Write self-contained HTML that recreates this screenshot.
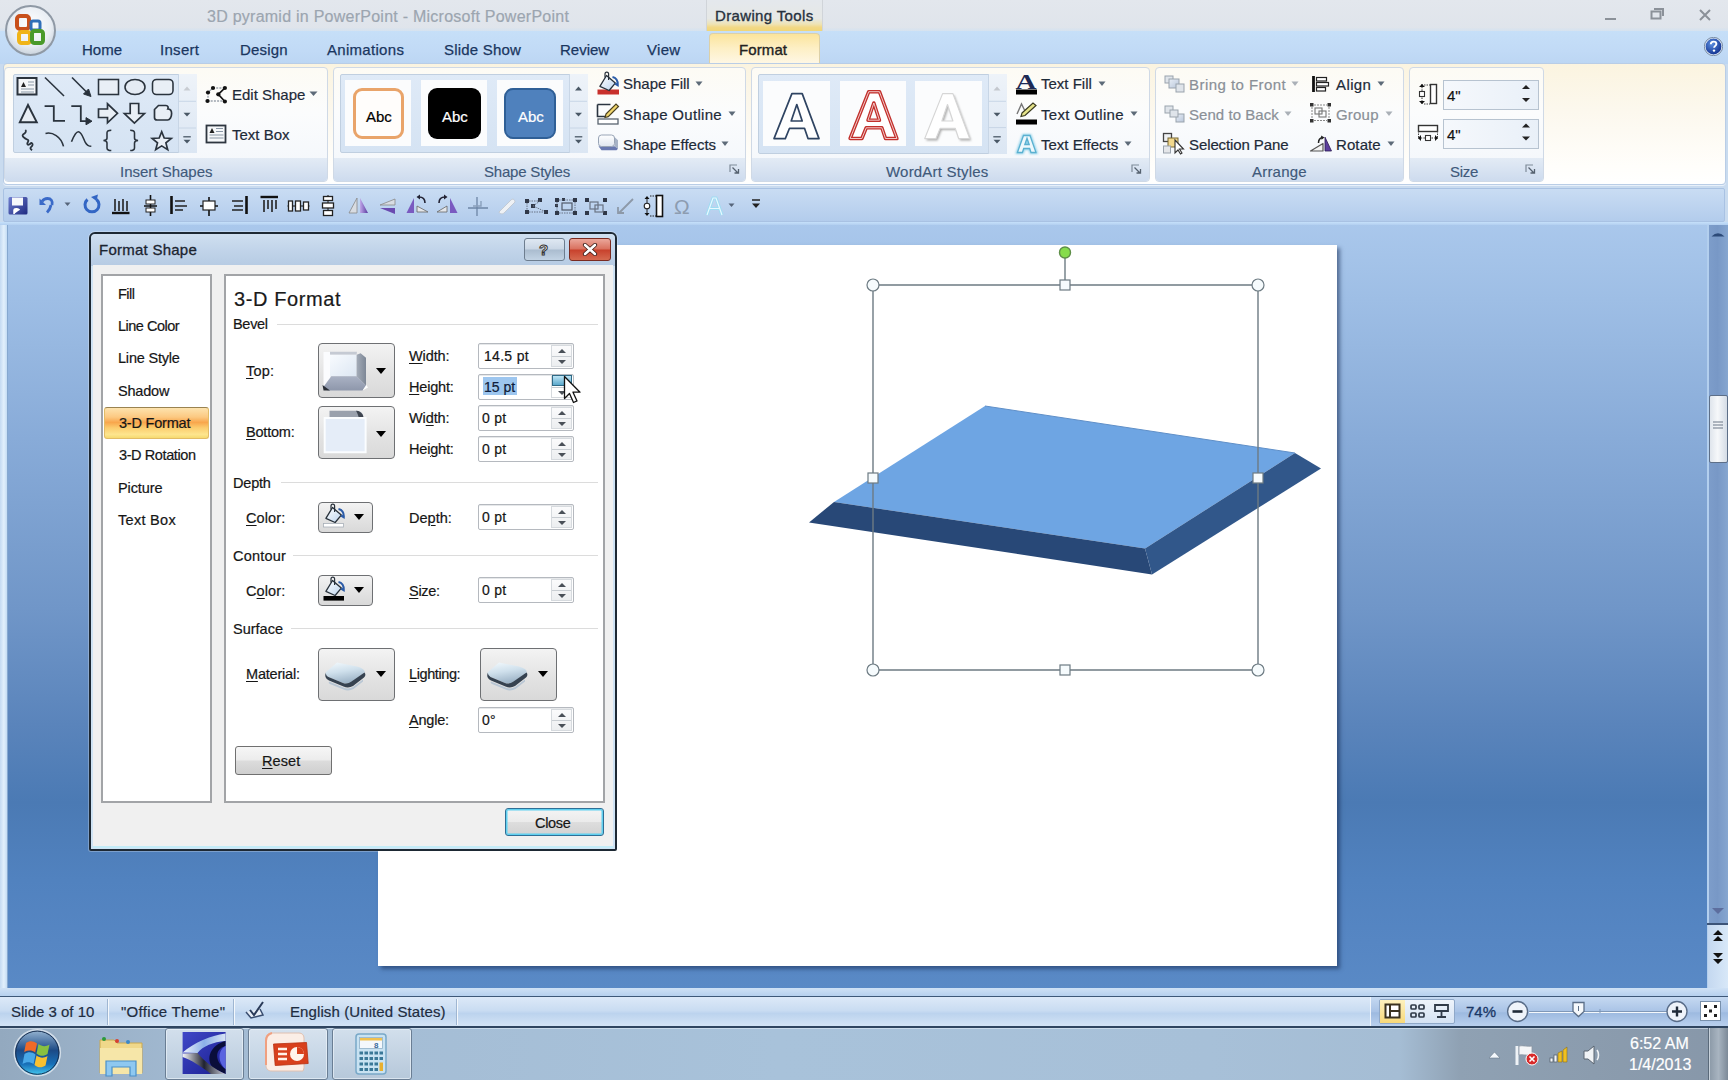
<!DOCTYPE html>
<html><head><meta charset="utf-8">
<style>
*{box-sizing:border-box;margin:0;padding:0}
html,body{width:1728px;height:1080px;overflow:hidden;position:relative;background:#c9dbef}
body{font-family:"Liberation Sans",sans-serif;color:#000}
.a{position:absolute}
.t{position:absolute;white-space:nowrap;line-height:1;-webkit-text-stroke:0.2px currentColor}
#titlebar{left:0;top:0;width:1728px;height:32px;background:linear-gradient(#e3e7ed,#dfe4eb)}
#tabrow{left:0;top:31px;width:1728px;height:33px;background:linear-gradient(#c6dff8,#c1daf6 60%,#bcd6f3)}
#ribbon{left:3px;top:63px;width:1723px;height:122px;border-radius:4px;background:linear-gradient(#fbf4e0 0%,#fcf8ee 40%,#fffefb 85%,#ffffff 100%);border:1px solid #b9cde6;box-shadow:0 1px 0 #e8f0fa}
.grp{position:absolute;top:67px;height:115px;border:1px solid #cfd9e6;border-radius:4px;background:linear-gradient(#fdfbf4 0%,#fbfcfd 40%,#f2f6fb 100%)}
.grp .lbl{position:absolute;left:0;right:0;bottom:0;height:23px;background:linear-gradient(#e3ebf5,#cddbee);border-radius:0 0 3px 3px}
.gl{position:absolute;white-space:nowrap;line-height:1;font-size:15px;color:#40597a;top:164px;-webkit-text-stroke:0.15px currentColor}
#qat{left:3px;top:188px;width:1722px;height:34px;background:linear-gradient(#c9dcf3,#b3ccec);border:1px solid #a9c2e3;border-radius:2px}
#work{left:0;top:222px;width:1728px;height:774px;background:linear-gradient(#aac8ec 0%,#9ebee5 10%,#88abd8 28%,#7096c8 50%,#5a84bb 65%,#4b7ab4 75%,#5182bf 85%,#5686c3 93%,#5a8ac6 100%)}
#slide{left:378px;top:245px;width:959px;height:721px;background:#fff;box-shadow:3px 3px 4px rgba(20,40,80,.55)}
#status{left:0;top:997px;width:1728px;height:30px;background:linear-gradient(#dde9f8 0%,#c9dcf2 45%,#bcd3ee 55%,#d5e5f6 100%)}
#taskbar{left:0;top:1027px;width:1728px;height:53px;background:linear-gradient(90deg,#93a9bf 0%,#a3bbd3 12%,#a8c2da 45%,#a7c0d8 70%,#a5bdd4 81%,#8fa1b3 84.5%,#8797a9 100%)}

.dt{position:absolute;white-space:nowrap;line-height:1;font-size:14.5px;color:#161616;-webkit-text-stroke:0.2px #161616}
.inp{position:absolute;width:96px;height:26px;border:1px solid #b5b9bf;border-radius:2px;background:#fff;box-shadow:inset 0 1px 0 #e6e8ea}
.spin{position:absolute;left:72px;top:1px;width:21px;height:22px;border:1px solid #d6dade;background:linear-gradient(#fbfbfc,#eceef0)}
.spin:before{content:"";position:absolute;left:0;right:0;top:10px;height:1px;background:#c8cdd2}
.spin i{position:absolute;left:6px;width:0;height:0;border-left:4px solid transparent;border-right:4px solid transparent}
.spin i.u{top:3px;border-bottom:4px solid #4a5058}
.spin i.d{top:14px;border-top:4px solid #4a5058}
.ddb{position:absolute;border:1.5px solid #6e7073;border-radius:4px;background:linear-gradient(#f3f3f3,#e2e2e2 60%,#d9d9d9)}
.ddb b{position:absolute;width:0;height:0;border-left:5.5px solid transparent;border-right:5.5px solid transparent;border-top:6px solid #000}
.sep{position:absolute;height:1px;background:#dcdcdc}
.ul{text-decoration:underline;text-underline-offset:2px}
</style></head><body>

<div id="titlebar" class="a"></div>
<div class="a" style="left:0;top:28px;width:1728px;height:4px;background:linear-gradient(#dde4ec,#d3e2f1)"></div>
<div class="t" style="left:207px;top:9px;font-size:16px;letter-spacing:0.25px;color:#9ca5b0">3D pyramid in PowerPoint - Microsoft PowerPoint</div>
<div class="a" style="left:706px;top:0;width:117px;height:31px;background:linear-gradient(#e4e8ed 0%,#e6e8e6 60%,#eee3b4 78%,#f2d886 88%,#f0d677 100%);border-left:1px solid #d0d4d9;border-right:1px solid #d0d4d9"></div>
<div class="t" style="left:715px;top:8px;font-size:15px;letter-spacing:0.35px;color:#27313e;-webkit-text-stroke:0.35px #27313e">Drawing Tools</div>
<div class="a" style="left:1605px;top:18px;width:11px;height:2px;background:#8b9199"></div>
<svg class="a" style="left:1650px;top:8px" width="15" height="12"><path d="M1.5 3.5h9v7h-9z M4 1h9v7" fill="none" stroke="#8b9199" stroke-width="2"/></svg>
<svg class="a" style="left:1698px;top:8px" width="14" height="14"><path d="M2 2L12 12M12 2L2 12" stroke="#8b9199" stroke-width="2"/></svg>


<div id="tabrow" class="a"></div>
<div class="t" style="left:82px;top:42px;font-size:15px;color:#1a365f;-webkit-text-stroke:0.25px #1a365f">Home</div>
<div class="t" style="left:160px;top:42px;font-size:15px;letter-spacing:0.3px;color:#1a365f;-webkit-text-stroke:0.25px #1a365f">Insert</div>
<div class="t" style="left:240px;top:42px;font-size:15px;letter-spacing:0.2px;color:#1a365f;-webkit-text-stroke:0.25px #1a365f">Design</div>
<div class="t" style="left:327px;top:42px;font-size:15px;letter-spacing:0.3px;color:#1a365f;-webkit-text-stroke:0.25px #1a365f">Animations</div>
<div class="t" style="left:444px;top:42px;font-size:15px;letter-spacing:0.2px;color:#1a365f;-webkit-text-stroke:0.25px #1a365f">Slide Show</div>
<div class="t" style="left:560px;top:42px;font-size:15px;color:#1a365f;-webkit-text-stroke:0.25px #1a365f">Review</div>
<div class="t" style="left:647px;top:42px;font-size:15px;letter-spacing:0.3px;color:#1a365f;-webkit-text-stroke:0.25px #1a365f">View</div>
<div class="a" style="left:709px;top:33px;width:111px;height:32px;border-radius:4px 4px 0 0;background:linear-gradient(#fbe49c 0%,#fdefc4 45%,#fef8e8 100%);border:1px solid #dcd0a8;border-bottom:none"></div>
<div class="t" style="left:739px;top:42px;font-size:15px;letter-spacing:0.1px;color:#222;-webkit-text-stroke:0.35px #222">Format</div>
<svg class="a" style="left:1704px;top:37px" width="19" height="19" viewBox="0 0 19 19"><defs><radialGradient id="hg" cx="40%" cy="35%" r="70%"><stop offset="0" stop-color="#5c8fe0"/><stop offset="1" stop-color="#0c2a8a"/></radialGradient></defs><circle cx="9.5" cy="9.5" r="8.5" fill="url(#hg)" stroke="#dbe6f5" stroke-width="1.2"/><circle cx="9.5" cy="9.5" r="9.2" fill="none" stroke="#4a5a70" stroke-width="0.6"/><path d="M6.8 7.2c0-1.6 1.2-2.6 2.8-2.6s2.8 1 2.8 2.4c0 1.8-2.3 2-2.3 3.8" fill="none" stroke="#fff" stroke-width="1.9"/><circle cx="10" cy="13.6" r="1.2" fill="#fff"/></svg>


<svg class="a" style="left:4px;top:4px" width="53" height="53" viewBox="0 0 53 53">
<defs><radialGradient id="obg" cx="50%" cy="40%" r="60%"><stop offset="0" stop-color="#ffffff"/><stop offset="0.7" stop-color="#e8edf3"/><stop offset="1" stop-color="#c9d2dc"/></radialGradient></defs>
<circle cx="26.5" cy="26.5" r="24.5" fill="url(#obg)" stroke="#8f99a5" stroke-width="2"/>
<rect x="13" y="12" width="12" height="13" rx="3" fill="none" stroke="#c8501c" stroke-width="4"/>
<rect x="27" y="17" width="9" height="9" rx="2" fill="none" stroke="#2f6fb8" stroke-width="3"/>
<rect x="15" y="28" width="11" height="11" rx="2.5" fill="none" stroke="#f0b418" stroke-width="4"/>
<rect x="28" y="27" width="11" height="12" rx="2.5" fill="none" stroke="#4a9a2a" stroke-width="4"/>
</svg>
<div id="ribbon" class="a"></div>
<div class="grp" style="left:4px;width:324px"><div class="lbl"></div></div>

<div class="a" style="left:13px;top:74px;width:184px;height:79px;border:1px solid #c0cfe0;border-radius:2px;background:linear-gradient(#dfeaf7,#d5e3f3)"></div>
<div class="a" style="left:178px;top:74px;width:19px;height:79px;border-left:1px solid #c8d6e6;background:linear-gradient(#eef3f9,#dbe6f3)"></div>
<svg class="a" style="left:0;top:60px" width="200" height="100" viewBox="0 60 200 100" fill="none" stroke="#2a333d" stroke-width="1.55">
<rect x="17.5" y="78" width="19" height="16.5" fill="#f4f6f8" stroke-width="2"/>
<path d="M21 87l2.5-5 2.5 5z" fill="#222" stroke="none"/><path d="M28 82h6M28 85h6M21 89h13M21 92h13" stroke="#8a97a6" stroke-width="1.2"/>
<path d="M45 77.5L64 96"/>
<path d="M72 77.5L88 93.5"/><path d="M91 96.5l-7.5-2.5 5-5z" fill="#28313b" stroke-width="1"/>
<rect x="98.5" y="79.5" width="20" height="15" fill="#e9eff6"/>
<ellipse cx="135" cy="87" rx="10" ry="7.5" fill="#e4ebf4"/>
<rect x="152.5" y="79.5" width="20.5" height="15" rx="4" fill="#e9eff6"/>
<path d="M28 105L19.8 122.3h17z" fill="#e7edf4" stroke-width="1.9"/>
<path d="M44.6 106.2h9.2v14.6H65" stroke-width="1.8"/>
<path d="M71.3 106.2h9.5v15h7.5" stroke-width="1.8"/><path d="M92 121.2l-6-3.6v7.2z" fill="#28313b" stroke-width="1"/>
<path d="M98.5 109h9v-5.2l10 9.5-10 9.5v-5.3h-9z" fill="#e9eff6" stroke-width="1.7"/>
<path d="M130.2 103.5h8.5v10h5.7l-10 9.5-10-9.5h5.8z" fill="#e9eff6" stroke-width="1.7"/>
<path d="M154.5 113v-3.5l4-4h7.5c2 0 2.5 2 1.8 3.5 2.8 0 3.8 2.2 3.8 4.5 0 3.2-1.7 6.5-4 6.5h-10.5c-1.6 0-2.6-1-2.6-2.5z" fill="#e9eff6" stroke-width="1.7"/>
<path d="M25.3 130c1.6 1.5 0 3-2.3 4.6-1 1 0 2.2 1.6 3.4 1.4 1.2 2.6 1.3 3.6 2.2 1.2 1.2-1.8 2.6-.8 4 1 1.3 2.7-.1 3.3-1 .7-.9 2.4.5 1.8 1.9-.7 1.7-2.8 2.4-2 3.6.3.6.9 1 1.6 1.4" stroke-width="1.8"/>
<path d="M45.5 133.4c7-1.6 15.5 3 18 13"/>
<path d="M71.5 141.8c2-5 4-10 6.8-10 3.5 0 5.4 7.8 7 10.5 2 3.6 3.6 4 6 4"/>
<path d="M111.3 130.2c-2.8 0-4.3.5-4.3 2.6v5.5c0 1.3-1.3 2-3.5 2.3 2.2.3 3.5 1 3.5 2.3v5c0 2 1.5 2.6 4.3 2.6"/>
<path d="M130.2 130.2c2.8 0 4.3.5 4.3 2.6v5.5c0 1.3 1.3 2 3.5 2.3-2.2.3-3.5 1-3.5 2.3v5c0 2-1.5 2.6-4.3 2.6"/>
<path d="M161.7 131.7l2.5 6.3 7.1.5-5.4 4.4 1.8 6.8-6-3.8-6 3.8 1.8-6.8-5.4-4.4 7.1-.5z" fill="#e9eff6" stroke-width="1.7"/>
<path d="M183.5 90.5l3.5-4 3.5 4z" fill="#c8ccd2" stroke="none"/>
<path d="M179 101.3h17M179 128h17" stroke="#c8d6e6" stroke-width="1"/>
<path d="M183.5 112.8h7l-3.5 3.8z" fill="#4a5866" stroke="none"/>
<path d="M183.3 136.8h7.5" stroke="#4a5866" stroke-width="1.3"/><path d="M183.5 139.8h7l-3.5 3.8z" fill="#4a5866" stroke="none"/>
</svg>
<svg class="a" style="left:200px;top:80px" width="40" height="70" viewBox="200 80 40 70">
<path d="M213 88h12M208 92.5v8.5M207.5 101h17.5" stroke="#9aa2ac" stroke-width="1.4" stroke-dasharray="2 1.2" fill="none"/>
<path d="M208 92.5l4.9-4.6" stroke="#9aa2ac" stroke-width="1.2" fill="none"/>
<path d="M224.9 88l-6.6 6.3 6.6 7.2" stroke="#111" stroke-width="1.7" fill="none"/>
<g fill="#111"><circle cx="213" cy="88" r="2.1"/><circle cx="224.9" cy="88" r="2.1"/><circle cx="208" cy="92.5" r="2.1"/><circle cx="218.3" cy="94.3" r="2.1"/><circle cx="207.5" cy="101" r="2.1"/><circle cx="224.9" cy="101.5" r="2.1"/></g>
<rect x="206.5" y="125.5" width="19" height="17" fill="#f6f8fa" stroke="#2e3640" stroke-width="1.8"/>
<path d="M209.5 133l2.5-5 2.5 5z" fill="#222"/><path d="M216 128.5h7M216 131.5h7M209.5 135h14M209.5 138h14" stroke="#8a97a6" stroke-width="1.2"/>
</svg>
<div class="t" style="left:232px;top:87px;font-size:15px;color:#1e2a38">Edit Shape</div>
<svg class="a" style="left:309px;top:91px" width="9" height="6"><path d="M0.5 0.5h8l-4 4.5z" fill="#5d6a78"/></svg>
<div class="t" style="left:232px;top:127px;font-size:15px;color:#1e2a38">Text Box</div>
<div class="grp" style="left:333px;width:413px"><div class="lbl"></div></div>

<div class="a" style="left:340px;top:74px;width:248px;height:79px;border:1px solid #c0cfe0;border-radius:2px;background:linear-gradient(#dfeaf7,#d5e3f3)"></div>
<div class="a" style="left:345px;top:80px;width:66px;height:66px;background:#fbfcfd"></div>
<div class="a" style="left:421px;top:80px;width:66px;height:66px;background:#fbfcfd"></div>
<div class="a" style="left:497px;top:80px;width:66px;height:66px;background:#fbfcfd"></div>
<div class="a" style="left:353px;top:88px;width:51px;height:51px;border:3px solid #e9a46a;border-radius:9px;background:#fffdfb"></div>
<div class="a" style="left:428px;top:88px;width:53px;height:51px;border-radius:9px;background:#000"></div>
<div class="a" style="left:504px;top:88px;width:52px;height:51px;border:2px solid #2f5f96;border-radius:9px;background:#4f81bd"></div>
<div class="t" style="left:366px;top:109px;font-size:15px;color:#000">Abc</div>
<div class="t" style="left:442px;top:109px;font-size:15px;color:#fff">Abc</div>
<div class="t" style="left:518px;top:109px;font-size:15px;color:#fff">Abc</div>
<div class="a" style="left:569px;top:74px;width:19px;height:79px;border-left:1px solid #c8d6e6;background:linear-gradient(#eef3f9,#dbe6f3)"></div>
<svg class="a" style="left:560px;top:70px" width="40" height="90" viewBox="560 70 40 90">
<path d="M575 90.5l3.5-4 3.5 4z" fill="#4a5866"/>
<path d="M570 101.3h17M570 128h17" stroke="#c8d6e6" stroke-width="1"/>
<path d="M575 112.8h7l-3.5 3.8z" fill="#4a5866"/>
<path d="M574.8 136.8h7.5" stroke="#4a5866" stroke-width="1.3"/><path d="M575 139.8h7l-3.5 3.8z" fill="#4a5866"/>
</svg>
<svg class="a" style="left:590px;top:70px" width="40" height="90" viewBox="590 70 40 90">
<rect x="597.5" y="89.5" width="21.5" height="5" fill="#c8302c"/>
<g transform="translate(274,-432)"><path d="M332.5 507.5l8.8 7.6-6.2 7.4-9.2-4.2z" fill="url(#bk)" stroke="#27303a" stroke-width="1.3" stroke-linejoin="round"/>
<path d="M331 509.5v-3.5c0-2.6 3.6-2.6 3.6 0v6" fill="none" stroke="#27303a" stroke-width="1.2"/>
<path d="M338.5 509c3.2.6 5.6 3.6 5.2 8.2l-2.6-1.6" fill="none" stroke="#2c5ca8" stroke-width="2.2"/></g>
<path d="M597.5 104.5h13M597.5 104.5v12h11" fill="none" stroke="#2a3440" stroke-width="1.6"/>
<path d="M606 114l10-10 2.5 2.5-10 10-3.5 1z" fill="#f1d66e" stroke="#4a4020" stroke-width="1.2"/>
<rect x="598" y="119" width="20" height="5" fill="#fff" stroke="#5a6470" stroke-width="1.3"/>
<defs><linearGradient id="sef" x1="0" y1="0" x2="0" y2="1"><stop offset="0" stop-color="#ffffff"/><stop offset="1" stop-color="#dfe6f0"/></linearGradient></defs>
<path d="M614.5 137l3.5 3.2v8.5l-3.5-2.5z" fill="#a6b2c6"/>
<path d="M598.5 146.2h16l3.5 2.5-1.5 1.6h-15z" fill="#6878b0"/>
<rect x="598.5" y="135" width="16" height="11.5" rx="3" fill="url(#sef)" stroke="#98a4b6" stroke-width="1"/>
</svg>
<div class="t" style="left:623px;top:76px;font-size:15px;color:#1e2a38">Shape Fill</div>
<svg class="a" style="left:695px;top:81px" width="9" height="6"><path d="M0.5 0.5h7l-3.5 4.5z" fill="#5d6a78"/></svg>
<div class="t" style="left:623px;top:107px;font-size:15px;letter-spacing:0.3px;color:#1e2a38">Shape Outline</div>
<svg class="a" style="left:728px;top:111px" width="9" height="6"><path d="M0.5 0.5h7l-3.5 4.5z" fill="#5d6a78"/></svg>
<div class="t" style="left:623px;top:137px;font-size:15px;color:#1e2a38">Shape Effects</div>
<svg class="a" style="left:721px;top:141px" width="9" height="6"><path d="M0.5 0.5h7l-3.5 4.5z" fill="#5d6a78"/></svg>
<svg class="a" style="left:729px;top:164px" width="11" height="10"><path d="M1 8V1h7" fill="none" stroke="#7f8b99" stroke-width="1.2"/><path d="M3.5 3.5l5 5M9.5 5v4h-4" fill="none" stroke="#55616f" stroke-width="1.3"/></svg>
<div class="grp" style="left:751px;width:399px"><div class="lbl"></div></div>

<div class="a" style="left:758px;top:74px;width:249px;height:80px;border:1px solid #c0cfe0;border-radius:2px;background:linear-gradient(#dfeaf7,#d5e3f3)"></div>
<div class="a" style="left:763px;top:81px;width:67px;height:65px;background:#fbfcfd"></div>
<div class="a" style="left:840px;top:81px;width:66px;height:65px;background:#fbfcfd"></div>
<div class="a" style="left:915px;top:81px;width:67px;height:65px;background:#fbfcfd"></div>
<svg class="a" style="left:760px;top:80px" width="230" height="70" viewBox="760 80 230 70">
<defs><filter id="ash" x="-20%" y="-20%" width="150%" height="150%"><feGaussianBlur stdDeviation="1.3"/></filter></defs>
<path d="M791.9 93.6H802.2L819 138.6H808L804.5 128.3H789.5L785.3 138.6H774Z M796.8 104.5L802.2 121H791.2Z" fill="#fff" fill-rule="evenodd" stroke="#2f4462" stroke-width="1.7" stroke-linejoin="round"/>
<g transform="translate(77,-1) translate(796,116) scale(1.04) translate(-796,-116)"><path d="M791.9 93.6H802.2L819 138.6H808L804.5 128.3H789.5L785.3 138.6H774Z M796.8 104.5L802.2 121H791.2Z" fill="#fff" fill-rule="evenodd" stroke="#c2302c" stroke-width="3.4" stroke-linejoin="round"/><path d="M791.9 93.6H802.2L819 138.6H808L804.5 128.3H789.5L785.3 138.6H774Z M796.8 104.5L802.2 121H791.2Z" fill="none" fill-rule="evenodd" stroke="#fbe8e8" stroke-width="0.8"/></g>
<g transform="translate(150.7,0)"><path d="M791.9 93.6H802.2L819 138.6H808L804.5 128.3H789.5L785.3 138.6H774Z M796.8 104.5L802.2 121H791.2Z" transform="translate(1.5,1.8)" fill="#aaa" filter="url(#ash)" fill-rule="evenodd"/><path d="M791.9 93.6H802.2L819 138.6H808L804.5 128.3H789.5L785.3 138.6H774Z M796.8 104.5L802.2 121H791.2Z" fill="#fff" fill-rule="evenodd" stroke="#d6d6d6" stroke-width="1.2" stroke-linejoin="round"/></g>
</svg>
<div class="a" style="left:988px;top:74px;width:19px;height:80px;border-left:1px solid #c8d6e6;background:linear-gradient(#eef3f9,#dbe6f3)"></div>
<svg class="a" style="left:980px;top:70px" width="40" height="90" viewBox="980 70 40 90">
<path d="M993.5 90.5l3.5-4 3.5 4z" fill="#c4c8ce"/>
<path d="M989 101.3h17M989 127.6h17" stroke="#c8d6e6" stroke-width="1"/>
<path d="M993.5 112.8h7l-3.5 3.8z" fill="#4a5866"/>
<path d="M993.3 136.8h7.5" stroke="#4a5866" stroke-width="1.3"/><path d="M993.5 139.8h7l-3.5 3.8z" fill="#4a5866"/>
</svg>
<svg class="a" style="left:1010px;top:70px" width="35" height="90" viewBox="1010 70 35 90">
<text x="1015.5" y="89" font-family="Liberation Serif" font-weight="700" font-size="22" fill="#1d2a55" textLength="21" lengthAdjust="spacingAndGlyphs">A</text>
<rect x="1016" y="89.5" width="21" height="5" fill="#000"/>
<path d="M1017 114l4.5-10 3 6" fill="none" stroke="#777" stroke-width="1.4"/>
<path d="M1022 113l11-10 3 2.5-11 10-4 1z" fill="#e6e48a" stroke="#3a3a20" stroke-width="1.2"/>
<rect x="1016" y="119.5" width="21" height="5" fill="#000"/>
<defs><filter id="teg" x="-30%" y="-30%" width="160%" height="160%"><feGaussianBlur stdDeviation="1"/></filter></defs>
<path d="M1023.5 135.5h6.5l6 17h-5l-1.3-4h-6l-1.3 4h-5z M1024.8 144.5h4.4l-2.2-6.3z" fill="none" stroke="#8fd2ea" stroke-width="3" filter="url(#teg)"/>
<path d="M1023.5 135.5h6.5l6 17h-5l-1.3-4h-6l-1.3 4h-5z M1024.8 144.5h4.4l-2.2-6.3z" fill="#eef8fc" fill-rule="evenodd" stroke="#5ab0d0" stroke-width="1.3"/>
</svg>
<div class="t" style="left:1041px;top:76px;font-size:15px;color:#1e2a38">Text Fill</div>
<svg class="a" style="left:1098px;top:81px" width="9" height="6"><path d="M0.5 0.5h7l-3.5 4.5z" fill="#5d6a78"/></svg>
<div class="t" style="left:1041px;top:107px;font-size:15px;letter-spacing:0.3px;color:#1e2a38">Text Outline</div>
<svg class="a" style="left:1130px;top:111px" width="9" height="6"><path d="M0.5 0.5h7l-3.5 4.5z" fill="#5d6a78"/></svg>
<div class="t" style="left:1041px;top:137px;font-size:15px;color:#1e2a38">Text Effects</div>
<svg class="a" style="left:1124px;top:141px" width="9" height="6"><path d="M0.5 0.5h7l-3.5 4.5z" fill="#5d6a78"/></svg>
<svg class="a" style="left:1131px;top:164px" width="11" height="10"><path d="M1 8V1h7" fill="none" stroke="#7f8b99" stroke-width="1.2"/><path d="M3.5 3.5l5 5M9.5 5v4h-4" fill="none" stroke="#55616f" stroke-width="1.3"/></svg>
<div class="grp" style="left:1155px;width:249px"><div class="lbl"></div></div>

<svg class="a" style="left:1160px;top:72px" width="175" height="85" viewBox="1160 72 175 85">
<defs><linearGradient id="bf" x1="0" y1="0" x2="1" y2="1"><stop offset="0" stop-color="#e8eef6"/><stop offset="1" stop-color="#b8c6da"/></linearGradient></defs>
<rect x="1165" y="76" width="8" height="7" fill="#dfe4ea" stroke="#9aa3ad" stroke-width="1"/>
<rect x="1169" y="79" width="10" height="9" fill="url(#bf)" stroke="#9aa3ad" stroke-width="1"/>
<rect x="1176" y="84" width="8" height="8" fill="#dfe4ea" stroke="#9aa3ad" stroke-width="1"/>
<rect x="1165" y="106" width="8" height="7" fill="#dfe4ea" stroke="#9aa3ad" stroke-width="1"/>
<rect x="1176" y="114" width="8" height="8" fill="url(#bf)" stroke="#9aa3ad" stroke-width="1"/>
<rect x="1170" y="110" width="8" height="7" fill="#dfe4ea" stroke="#9aa3ad" stroke-width="1"/>
<rect x="1163.5" y="133.5" width="8" height="8" fill="#eef0f2" stroke="#444" stroke-width="1.3"/>
<rect x="1168" y="138" width="10" height="9" fill="#f2d88c" stroke="#776633" stroke-width="1"/>
<rect x="1163.5" y="146" width="7" height="7" fill="#e4e6e9" stroke="#9aa3ad" stroke-width="1"/>
<path d="M1175 140v13l3-3 2.5 4 1.5-1-2.5-4h4z" fill="#fff" stroke="#333" stroke-width="1.1"/>
<path d="M1313.5 76v16" stroke="#111" stroke-width="2.8"/>
<rect x="1316.5" y="77.5" width="10" height="3.5" fill="#fff" stroke="#222" stroke-width="1.2"/><rect x="1316.5" y="82.5" width="12" height="3.5" fill="#fff" stroke="#222" stroke-width="1.2"/><rect x="1316.5" y="87.5" width="9" height="3.5" fill="#fff" stroke="#222" stroke-width="1.2"/>
<g fill="#333"><rect x="1310" y="103" width="3.5" height="3.5"/><rect x="1327.5" y="103" width="3.5" height="3.5"/><rect x="1310" y="119" width="3.5" height="3.5"/><rect x="1327.5" y="119" width="3.5" height="3.5"/></g>
<path d="M1312 107v11M1329 107v11M1314 105h13M1314 120.5h13" stroke="#888" stroke-width="1" stroke-dasharray="2 1"/>
<rect x="1315" y="108" width="7" height="6" fill="none" stroke="#777" stroke-width="1.1"/><rect x="1319" y="111" width="7" height="6" fill="none" stroke="#777" stroke-width="1.1"/>
<path d="M1310.5 151L1323 143.5V151Z" fill="#f4f4f4" stroke="#555" stroke-width="1.2" stroke-linejoin="round"/>
<path d="M1318.5 143c0-3 1.5-5 4-5.5" fill="none" stroke="#222" stroke-width="1.5"/><path d="M1321 135.5l3.5 2-3 2.2z" fill="#222"/>
<path d="M1325 137.2L1331.5 151H1325Z" fill="#5c3e9e" stroke="#2a1a50" stroke-width="0.8"/>
</svg>
<div class="t" style="left:1189px;top:77px;font-size:15px;letter-spacing:0.45px;color:#8a9097">Bring to Front</div>
<svg class="a" style="left:1291px;top:81px" width="9" height="6"><path d="M0.5 0.5h7l-3.5 4.5z" fill="#aab0b7"/></svg>
<div class="t" style="left:1189px;top:107px;font-size:15px;letter-spacing:0.05px;color:#8a9097">Send to Back</div>
<svg class="a" style="left:1284px;top:111px" width="9" height="6"><path d="M0.5 0.5h7l-3.5 4.5z" fill="#aab0b7"/></svg>
<div class="t" style="left:1189px;top:137px;font-size:15px;letter-spacing:-0.1px;color:#1e2a38">Selection Pane</div>
<div class="t" style="left:1336px;top:77px;font-size:15px;letter-spacing:0.4px;color:#1e2a38">Align</div>
<svg class="a" style="left:1377px;top:81px" width="9" height="6"><path d="M0.5 0.5h7l-3.5 4.5z" fill="#5d6a78"/></svg>
<div class="t" style="left:1336px;top:107px;font-size:15px;letter-spacing:0.2px;color:#8a9097">Group</div>
<svg class="a" style="left:1385px;top:111px" width="9" height="6"><path d="M0.5 0.5h7l-3.5 4.5z" fill="#aab0b7"/></svg>
<div class="t" style="left:1336px;top:137px;font-size:15px;letter-spacing:0.1px;color:#1e2a38">Rotate</div>
<svg class="a" style="left:1387px;top:141px" width="9" height="6"><path d="M0.5 0.5h7l-3.5 4.5z" fill="#5d6a78"/></svg>
<div class="grp" style="left:1409px;width:135px"><div class="lbl"></div></div>

<svg class="a" style="left:1414px;top:78px" width="30" height="70" viewBox="1414 78 30 70">
<rect x="1430.5" y="84.5" width="6" height="19" fill="#fff" stroke="#333" stroke-width="1.4"/>
<path d="M1422 84v20" stroke="#333" stroke-width="1" stroke-dasharray="1.5 1.2"/>
<path d="M1419 87l3-3 3 3zM1419 101l3 3 3-3z" fill="#111"/>
<rect x="1419.5" y="91.5" width="5" height="5" fill="#fff" stroke="#333" stroke-width="1.1"/>
<path d="M1424 85h6M1424 104h6" stroke="#444" stroke-width="1" stroke-dasharray="1.5 1"/>
<rect x="1418.5" y="125.5" width="19" height="6" fill="#fff" stroke="#333" stroke-width="1.4"/>
<path d="M1418 138h20" stroke="#333" stroke-width="1" stroke-dasharray="1.5 1.2"/>
<path d="M1421 135l-3 3 3 3zM1435 135l3 3-3 3z" fill="#111"/>
<rect x="1425.5" y="135.5" width="5" height="5" fill="#fff" stroke="#333" stroke-width="1.1"/>
<path d="M1418.5 131v7M1437.5 131v7" stroke="#444" stroke-width="1" stroke-dasharray="1.5 1"/>
</svg>
<div class="a" style="left:1443px;top:80px;width:96px;height:30px;border:1px solid #b7c3d0;background:linear-gradient(90deg,#f5f8fc,#e9f0f8)"></div>
<div class="a" style="left:1443px;top:119px;width:96px;height:30px;border:1px solid #b7c3d0;background:linear-gradient(90deg,#f5f8fc,#e9f0f8)"></div>
<div class="t" style="left:1447px;top:88px;font-size:15px;color:#111">4"</div>
<div class="t" style="left:1447px;top:127px;font-size:15px;color:#111">4"</div>
<svg class="a" style="left:1520px;top:84px" width="12" height="60"><path d="M2 5l4-4 4 4zM2 14l4 4 4-4zM2 43.5l4-4 4 4zM2 52.5l4 4 4-4z" fill="#222"/></svg>
<svg class="a" style="left:1525px;top:164px" width="11" height="10"><path d="M1 8V1h7" fill="none" stroke="#7f8b99" stroke-width="1.2"/><path d="M3.5 3.5l5 5M9.5 5v4h-4" fill="none" stroke="#55616f" stroke-width="1.3"/></svg>

<div class="gl" style="left:120px">Insert Shapes</div>
<div class="gl" style="left:484px;letter-spacing:-0.2px">Shape Styles</div>
<div class="gl" style="left:886px;letter-spacing:0.2px">WordArt Styles</div>
<div class="gl" style="left:1252px;letter-spacing:0.2px">Arrange</div>
<div class="gl" style="left:1450px;letter-spacing:-0.3px">Size</div>
<div id="qat" class="a"></div>
<svg class="a" style="left:0;top:188px" width="780" height="34" viewBox="0 188 780 34">
<defs><linearGradient id="flop" x1="0" y1="0" x2="1" y2="1"><stop offset="0" stop-color="#6f7fd0"/><stop offset="1" stop-color="#1f2a80"/></linearGradient>
<linearGradient id="purp" x1="0" y1="0" x2="1" y2="0"><stop offset="0" stop-color="#c0a8e8"/><stop offset="1" stop-color="#5a3aa0"/></linearGradient></defs>
<rect x="8.5" y="197" width="19" height="17.5" rx="1.5" fill="url(#flop)"/>
<rect x="12" y="197.5" width="11" height="8" fill="#f6f8fb"/>
<path d="M14 214v-4c0-1.3 4-2 5.5 0" fill="#fff" stroke="#fff" stroke-width="1.5"/>
<path d="M52 205c1-4-1-6.5-4.5-6.5-2.5 0-4.5 1.5-5.5 3" fill="none" stroke="#3a6ac8" stroke-width="2.8"/><path d="M39.5 198.5v6.5h6.5z" fill="#3a6ac8"/><path d="M51 205c-.5 3-2 5.5-4 7.5" fill="none" stroke="#3a6ac8" stroke-width="2.8"/>
<path d="M64.5 202.5h6l-3 3.5z" fill="#56657a"/>
<path d="M96.5 199.5a7 7 0 1 1-9 0" fill="none" stroke="#3366c4" stroke-width="3"/><path d="M91 197l5.5 4 1.5-6.5z" fill="#3366c4"/>
<path d="M112 213h17.5" stroke="#111" stroke-width="2.4"/><path d="M115 199v12M119 201v10M123 199v12M127 201v10" stroke="#222" stroke-width="1.6"/>
<path d="M150.5 195v21M144 206h13" stroke="#111" stroke-width="1.6"/><rect x="146" y="200" width="9" height="4" fill="#fff" stroke="#222" stroke-width="1"/><rect x="146" y="208" width="9" height="4" fill="#fff" stroke="#222" stroke-width="1"/>
<path d="M171.5 196v18" stroke="#111" stroke-width="2.6"/><path d="M175 201h10M175 206h12M175 210h8" stroke="#222" stroke-width="1.5"/>
<path d="M209 197v19M200 206h18" stroke="#111" stroke-width="1.6"/><rect x="203" y="201" width="12" height="9" fill="#fff" stroke="#222" stroke-width="1.2"/>
<path d="M246.5 196v18" stroke="#111" stroke-width="2.6"/><path d="M232 201h11M234 206h9M232 210h11" stroke="#222" stroke-width="1.5"/>
<path d="M260.5 197h17.5" stroke="#111" stroke-width="2.4"/><path d="M264 200v12M268 200v9M272 200v12M276 200v9" stroke="#222" stroke-width="1.6"/>
<path d="M287.5 206h22" stroke="#222" stroke-width="1.1"/><rect x="288.5" y="201" width="4" height="10" fill="#fff" stroke="#222" stroke-width="1.3"/><rect x="295.5" y="201" width="5" height="10" fill="#fff" stroke="#222" stroke-width="1.3"/><rect x="303.5" y="202" width="5" height="8" fill="#fff" stroke="#222" stroke-width="1.3"/>
<path d="M328 195v21" stroke="#222" stroke-width="1.1"/><rect x="323.5" y="196.5" width="9" height="4" fill="#fff" stroke="#222" stroke-width="1.3"/><rect x="322.5" y="203" width="11" height="5" fill="#fff" stroke="#222" stroke-width="1.3"/><rect x="323.5" y="210.5" width="9" height="5" fill="#fff" stroke="#222" stroke-width="1.3"/>
<path d="M357 198l-8 15h8z" fill="#d8dce2" stroke="#888" stroke-width="0.8"/><path d="M360 198l8 15h-8z" fill="url(#purp)"/>
<path d="M395 199l-15 6h15z" fill="#d8dce2" stroke="#888" stroke-width="0.8"/><path d="M395 208l-15 0 15 6z" fill="#6a4ab0"/>
<path d="M414 198l-7.5 15h7.5z" fill="#7a5ac0"/><path d="M417 212h11l-11-6z" fill="#e4e6ea" stroke="#666" stroke-width="0.8"/><path d="M419 197c4 0 6 2 6 6" fill="none" stroke="#223" stroke-width="1.6"/><path d="M416.5 197l3.5-2.5v5z" fill="#223"/>
<path d="M450 198l7.5 15H450z" fill="#7a5ac0"/><path d="M447 212h-10l10-6z" fill="#e4e6ea" stroke="#666" stroke-width="0.8"/><path d="M445 197c-4 0-6 2-6 6" fill="none" stroke="#223" stroke-width="1.6"/><path d="M447.5 197l-3.5-2.5v5z" fill="#223"/>
<path d="M477 197v19M468 208h20" stroke="#6d86a6" stroke-width="1.3"/><path d="M473 206h8v-5" fill="none" stroke="#8aa0bc" stroke-width="1.4"/>
<path d="M499 212l12-12c2-2 4 0 4 2l-11 11c-2 2-5 0-5-1z" fill="#eef1f5" stroke="#c2cad4" stroke-width="1"/>
<g fill="#303848"><rect x="525" y="199" width="4" height="4"/><rect x="538" y="198" width="4" height="4"/><rect x="531" y="204" width="4" height="4"/><rect x="525" y="210" width="4" height="4"/><rect x="544" y="210" width="4" height="4"/></g>
<path d="M527 203v7M529 201h9M533 206l7-5M533 206l11 5M529 212h15" stroke="#606a7a" stroke-width="0.9" stroke-dasharray="1.5 1"/>
<g fill="#303848"><rect x="555" y="198" width="4" height="4"/><rect x="573" y="198" width="4" height="4"/><rect x="555" y="211" width="4" height="4"/><rect x="573" y="211" width="4" height="4"/><rect x="562" y="198" width="3" height="3"/><rect x="555" y="204" width="3" height="3"/></g>
<rect x="562" y="203" width="10" height="7" fill="none" stroke="#505a6a" stroke-width="1.2"/><path d="M557 202v9M575 202v9M559 200h14M559 213h14" stroke="#606a7a" stroke-width="0.9" stroke-dasharray="1.5 1"/>
<g fill="#303848"><rect x="585" y="198" width="4" height="4"/><rect x="603" y="198" width="4" height="4"/><rect x="585" y="211" width="4" height="4"/><rect x="603" y="211" width="4" height="4"/></g>
<rect x="590" y="202" width="8" height="7" fill="none" stroke="#6a7484" stroke-width="1.2"/><rect x="595" y="205" width="8" height="7" fill="none" stroke="#6a7484" stroke-width="1.2"/>
<path d="M633 199l-14 14M618 207v6h6" fill="none" stroke="#8d99a8" stroke-width="1.8"/>
<path d="M650 196h8M650 216h8" stroke="#222" stroke-width="1" stroke-dasharray="1.5 1"/><rect x="656.5" y="195.5" width="6" height="21" fill="#fff" stroke="#111" stroke-width="1.6"/><path d="M647 197v18" stroke="#222" stroke-width="1"/><circle cx="647" cy="206" r="2.8" fill="#fff" stroke="#222" stroke-width="1.1"/><path d="M644.5 199l2.5-3 2.5 3zM644.5 213l2.5 3 2.5-3z" fill="#111"/>
<text x="674" y="214" font-family="Liberation Sans" font-size="21" fill="#8d9cb0">&#937;</text>
<path d="M707 215l6-17h3l6 17M709.5 208.5h10" fill="none" stroke="#9fdcf2" stroke-width="3.2"/><path d="M707 215l6-17h3l6 17M709.5 208.5h10" fill="none" stroke="#e8f8ff" stroke-width="1.2"/>
<path d="M728.5 203.5h6l-3 3.5z" fill="#56657a"/>
<path d="M752 200h8" stroke="#222" stroke-width="1.5"/><path d="M752 203.5h8l-4 4.5z" fill="#222"/>
</svg>

<div id="work" class="a"></div>
<div id="slide" class="a"></div>
<svg class="a" style="left:378px;top:245px" width="959" height="721" viewBox="378 245 959 721">
<path d="M985 406L1295 453L1145 548.5L834 502Z" fill="#6ea5e3"/>
<path d="M834 502L1145 548.5L1152 574.4L809 522.4Z" fill="#284877"/>
<path d="M1145 548.5L1295 453L1321 468.5L1152 574.4Z" fill="#31578a"/>
<path d="M985 406L1295 453" stroke="#5f8fc8" stroke-width="1" fill="none"/>
<g fill="none" stroke="#6d7b83" stroke-width="1.4">
<path d="M873 285H1258V670H873Z"/>
<path d="M1065 258V280"/>
</g>
<g fill="#f6fbfd" stroke="#6d7b83" stroke-width="1.2">
<circle cx="873" cy="285" r="6"/><circle cx="1258" cy="285" r="6"/><circle cx="873" cy="670" r="6"/><circle cx="1258" cy="670" r="6"/>
<rect x="1060" y="280" width="10" height="10"/><rect x="1060" y="665" width="10" height="10"/>
<rect x="868" y="473" width="10" height="10"/><rect x="1253" y="473" width="10" height="10"/>
</g>
<circle cx="1065" cy="252.5" r="5.5" fill="#86dc4c" stroke="#5e8e48" stroke-width="1.4"/>
</svg>


<div class="a" style="left:89px;top:232px;width:528px;height:619px;border:2px solid #1d2833;border-radius:6px 6px 2px 2px;background:#cfe3f4;box-shadow:0 0 0 1px rgba(255,255,255,.25)"></div>
<div class="a" style="left:91px;top:234px;width:524px;height:32px;border-radius:5px 5px 0 0;background:linear-gradient(#cfdff0,#c0d3e9 55%,#b6cbe3)"></div>
<div class="a" style="left:93px;top:265px;width:520px;height:583px;background:#f0f0f0;border-bottom:2px solid #c4ecf8"></div>
<div class="t" style="left:99px;top:242px;font-size:15px;letter-spacing:0.25px;color:#1b2430;-webkit-text-stroke:0.3px #1b2430">Format Shape</div>
<div class="a" style="left:524px;top:238px;width:41px;height:23px;border:1px solid #6d7d8f;border-radius:3px;background:linear-gradient(#dfe8f2 0%,#c9d6e5 48%,#aabccf 52%,#c2d3e4 100%)"></div>
<div class="t" style="left:539px;top:242px;font-size:15px;font-weight:700;color:#fff;-webkit-text-stroke:1px #333">?</div>
<div class="a" style="left:569px;top:238px;width:42px;height:23px;border:1px solid #7a2a20;border-radius:3px;background:linear-gradient(#eba79b 0%,#d9705e 48%,#c8412c 52%,#d56a50 100%)"></div>
<svg class="a" style="left:582px;top:243px" width="16" height="13"><path d="M3 2L13 11M13 2L3 11" stroke="#3a1a14" stroke-width="4.2" stroke-linecap="round"/><path d="M3 2L13 11M13 2L3 11" stroke="#fff" stroke-width="2.6" stroke-linecap="round"/></svg>
<div class="a" style="left:101px;top:274px;width:111px;height:529px;border:2px solid #a2a4a7;background:#fff"></div>
<div class="a" style="left:224px;top:274px;width:381px;height:529px;border:2px solid #a2a4a7;background:#fff"></div>
<div class="dt" style="left:118px;top:287px;letter-spacing:-0.5px">Fill</div>
<div class="dt" style="left:118px;top:319px;letter-spacing:-0.5px">Line Color</div>
<div class="dt" style="left:118px;top:351px;letter-spacing:-0.2px">Line Style</div>
<div class="dt" style="left:118px;top:384px;letter-spacing:-0.2px">Shadow</div>
<div class="a" style="left:104px;top:407px;width:105px;height:32px;border:1px solid #e2bc66;border-top:1.5px solid #9a8350;border-radius:3px;background:linear-gradient(#fde3ae 0%,#fcc982 30%,#f8a64c 48%,#fbcc6e 66%,#fde58e 88%,#f6da70 100%)"></div>
<div class="dt" style="left:119px;top:416px;letter-spacing:-0.2px">3-D Format</div>
<div class="dt" style="left:119px;top:448px;letter-spacing:-0.4px">3-D Rotation</div>
<div class="dt" style="left:118px;top:481px;letter-spacing:-0.1px">Picture</div>
<div class="dt" style="left:118px;top:513px;letter-spacing:0.3px">Text Box</div>
<div class="t" style="left:234px;top:289px;font-size:20px;letter-spacing:0.6px;color:#1a1a1a">3-D Format</div>
<div class="dt" style="left:233px;top:317px;letter-spacing:-0.3px">Bevel</div><div class="sep" style="left:277px;top:324px;width:321px"></div>
<div class="dt" style="left:246px;top:364px;letter-spacing:0.2px"><span class="ul">T</span>op:</div>
<div class="dt" style="left:246px;top:425px;letter-spacing:-0.2px"><span class="ul">B</span>ottom:</div>
<div class="ddb" style="left:318px;top:343px;width:77px;height:55px"><b style="left:57px;top:24px"></b></div>
<div class="ddb" style="left:318px;top:406px;width:77px;height:53px"><b style="left:57px;top:24px"></b></div>
<svg class="a" style="left:320px;top:346px" width="50" height="110" viewBox="320 346 50 110">
<defs><linearGradient id="bvt" x1="0" y1="0" x2="1" y2="1"><stop offset="0" stop-color="#f8fbfe"/><stop offset="1" stop-color="#dde7f3"/></linearGradient>
<linearGradient id="bvr" x1="0" y1="0" x2="1" y2="0"><stop offset="0" stop-color="#a4acb8"/><stop offset="1" stop-color="#7d8796"/></linearGradient>
<linearGradient id="bvb" x1="0" y1="0" x2="0" y2="1"><stop offset="0" stop-color="#aab2c4"/><stop offset="1" stop-color="#8e97ab"/></linearGradient></defs>
<path d="M323.5 352h7v34l-7 4z" fill="#fbfcfe"/>
<path d="M330 351.8h27l-0.5 3h-26.5z" fill="#c5cad3"/>
<path d="M330 354.8h26.6v21.5h-26.6z" fill="url(#bvt)"/>
<path d="M356.6 354.8l4-1.5 5.4 4.5v27.7l-9.4-9z" fill="url(#bvr)"/>
<path d="M323.5 386.7l7.8-10.4h25.3l9.4 9.2-3.4 4.9h-34.9z" fill="url(#bvb)"/>
<path d="M322.5 385l7.5 5.5h-6.5z" fill="#2a2e36"/>
<path d="M362.5 390.4l3.5-4.9v-1l2 3z" fill="#fff"/>
<path d="M329.5 410.8h27c3 0 5 1.5 6.1 3.5v4.9h-33.1z" fill="#9aa1ad"/>
<path d="M356 410.8c3.5 0 6 2 7.2 5l0.6 3.5l-5-1.5c-0.5-2-1.5-5-2.8-7z" fill="#3e4550"/>
<path d="M324.7 418h40.9v34.3h-40.9z" fill="#e5edf8"/>
<path d="M324.7 418h40.9v34.3h-40.9z" fill="none" stroke="#fbfdff" stroke-width="2"/>
</svg>
<div class="dt" style="left:409px;top:349px;letter-spacing:-0.1px"><span class="ul">W</span>idth:</div>
<div class="dt" style="left:409px;top:380px;letter-spacing:-0.2px"><span class="ul">H</span>eight:</div>
<div class="dt" style="left:409px;top:411px;letter-spacing:-0.1px">Wi<span class="ul">d</span>th:</div>
<div class="dt" style="left:409px;top:442px;letter-spacing:-0.2px">Hei<span class="ul">g</span>ht:</div>
<div class="inp" style="left:478px;top:343px"><div class="spin"><i class="u"></i><i class="d"></i></div></div>
<div class="inp" style="left:478px;top:374px"><div class="spin" style="background:#fff"><i class="u" style="display:none"></i><i class="d"></i></div></div>
<div class="inp" style="left:478px;top:405px"><div class="spin"><i class="u"></i><i class="d"></i></div></div>
<div class="inp" style="left:478px;top:436px"><div class="spin"><i class="u"></i><i class="d"></i></div></div>
<div class="dt" style="left:484px;top:349px;font-size:14px;letter-spacing:0.3px">14.5 pt</div>
<div class="a" style="left:483px;top:377px;width:34px;height:18px;background:#9dc6ef"></div>
<div class="dt" style="left:484px;top:380px;font-size:14px;letter-spacing:0px;color:#0c2044">15 pt</div>
<div class="dt" style="left:482px;top:411px;font-size:14px;letter-spacing:0.3px">0 pt</div>
<div class="dt" style="left:482px;top:442px;font-size:14px;letter-spacing:0.3px">0 pt</div>
<div class="a" style="left:552px;top:375px;width:20px;height:11px;border:1.5px solid #2f6a86;background:linear-gradient(#bfe6f6,#5aa8cc)"></div>
<svg class="a" style="left:560px;top:372px" width="24" height="34"><path d="M4.5 4.5v22l5-5 4 9 3.5-1.6-4-8.7h7z" fill="#fff" stroke="#111" stroke-width="1.3" stroke-linejoin="round"/></svg>
<div class="dt" style="left:233px;top:476px;letter-spacing:-0.2px">Depth</div><div class="sep" style="left:281px;top:482px;width:317px"></div>
<div class="dt" style="left:246px;top:511px;letter-spacing:0.1px"><span class="ul">C</span>olor:</div>
<div class="ddb" style="left:318px;top:502px;width:55px;height:31px"><b style="left:35px;top:11px"></b></div>
<div class="dt" style="left:409px;top:511px;letter-spacing:0px">De<span class="ul">p</span>th:</div>
<div class="inp" style="left:478px;top:504px"><div class="spin"><i class="u"></i><i class="d"></i></div></div>
<div class="dt" style="left:482px;top:510px;font-size:14px;letter-spacing:0.3px">0 pt</div>
<div class="dt" style="left:233px;top:549px;letter-spacing:0.2px">Contour</div><div class="sep" style="left:293px;top:555px;width:305px"></div>
<div class="dt" style="left:246px;top:584px;letter-spacing:0.1px">C<span class="ul">o</span>lor:</div>
<div class="ddb" style="left:318px;top:575px;width:55px;height:31px"><b style="left:35px;top:11px"></b></div>
<div class="dt" style="left:409px;top:584px;letter-spacing:-0.3px"><span class="ul">S</span>ize:</div>
<div class="inp" style="left:478px;top:577px"><div class="spin"><i class="u"></i><i class="d"></i></div></div>
<div class="dt" style="left:482px;top:583px;font-size:14px;letter-spacing:0.3px">0 pt</div>
<svg class="a" style="left:320px;top:500px" width="30" height="110" viewBox="320 500 30 110">
<defs><linearGradient id="bk" x1="0" y1="0" x2="1" y2="1"><stop offset="0" stop-color="#ffffff"/><stop offset="1" stop-color="#bcd4ee"/></linearGradient></defs>
<g id="pb"><path d="M332.5 507.5l8.8 7.6-6.2 7.4-9.2-4.2z" fill="url(#bk)" stroke="#27303a" stroke-width="1.3" stroke-linejoin="round"/>
<path d="M331 509.5v-3.5c0-2.6 3.6-2.6 3.6 0v6" fill="none" stroke="#27303a" stroke-width="1.2"/>
<path d="M338.5 509c3.2.6 5.6 3.6 5.2 8.2l-2.6-1.6" fill="none" stroke="#2c5ca8" stroke-width="2.2"/></g>
<rect x="323.5" y="523.5" width="20" height="3.5" fill="#fff" stroke="#a8b0b8" stroke-width="0.8"/>
<use href="#pb" y="73"/>
<rect x="323.5" y="596" width="20.5" height="4.6" fill="#000"/>
</svg>
<div class="dt" style="left:233px;top:622px;letter-spacing:0px">Surface</div><div class="sep" style="left:291px;top:628px;width:307px"></div>
<div class="dt" style="left:246px;top:667px;letter-spacing:-0.2px"><span class="ul">M</span>aterial:</div>
<div class="ddb" style="left:318px;top:648px;width:77px;height:53px"><b style="left:57px;top:22px"></b></div>
<div class="dt" style="left:409px;top:667px;letter-spacing:-0.4px"><span class="ul">L</span>ighting:</div>
<div class="ddb" style="left:480px;top:648px;width:77px;height:53px"><b style="left:57px;top:22px"></b></div>
<svg class="a" style="left:320px;top:650px" width="240" height="50" viewBox="320 650 240 50">
<defs><linearGradient id="mt" x1="0" y1="0" x2="0.3" y2="1"><stop offset="0" stop-color="#f4fafd"/><stop offset="0.5" stop-color="#cfe0ec"/><stop offset="1" stop-color="#9fb5c8"/></linearGradient></defs>
<path d="M337 662.5L357 666.5Q366 669 364.5 673L351.5 682Q347.5 684.5 343 683L328.5 677Q324.5 675 326 672Z" fill="url(#mt)"/>
<path d="M326 672.5Q323.5 677.5 329 680.5L343.5 686.5Q348.5 688.5 353 686L364 677.5Q366.5 675 364.5 672.5L351.5 681.5Q347.5 684.5 343 683L328.5 677Q325.5 675.5 326 672.5Z" fill="#364250"/>
<path d="M329 681.5L343.5 687.5Q348.5 689.5 353 687L363 679.5L363 681.5L353.5 689Q348.5 691.5 343.5 689.5L330 684Q328 683 329 681.5Z" fill="#b8c6d4"/>
<g transform="translate(162,0)"><path d="M337 662.5L357 666.5Q366 669 364.5 673L351.5 682Q347.5 684.5 343 683L328.5 677Q324.5 675 326 672Z" fill="url(#mt)"/>
<path d="M326 672.5Q323.5 677.5 329 680.5L343.5 686.5Q348.5 688.5 353 686L364 677.5Q366.5 675 364.5 672.5L351.5 681.5Q347.5 684.5 343 683L328.5 677Q325.5 675.5 326 672.5Z" fill="#364250"/>
<path d="M329 681.5L343.5 687.5Q348.5 689.5 353 687L363 679.5L363 681.5L353.5 689Q348.5 691.5 343.5 689.5L330 684Q328 683 329 681.5Z" fill="#b8c6d4"/></g>
</svg>
<div class="dt" style="left:409px;top:713px;letter-spacing:-0.2px"><span class="ul">A</span>ngle:</div>
<div class="inp" style="left:478px;top:707px"><div class="spin"><i class="u"></i><i class="d"></i></div></div>
<div class="dt" style="left:482px;top:713px;font-size:14px;letter-spacing:0.3px">0°</div>
<div class="a" style="left:235px;top:746px;width:97px;height:29px;border:1.5px solid #707070;border-radius:3px;background:linear-gradient(#f6f6f6 0%,#ececec 48%,#dcdcdc 52%,#cfcfcf 100%)"></div>
<div class="dt" style="left:262px;top:754px;letter-spacing:0.1px"><span class="ul">R</span>eset</div>
<div class="a" style="left:505px;top:808px;width:99px;height:28px;border:1.5px solid #2f6f96;border-radius:3px;background:linear-gradient(#f4f4f4 0%,#ebebeb 48%,#dddddd 52%,#d2d2d2 100%);box-shadow:inset 0 0 0 1.5px #5fd0f0"></div>
<div class="dt" style="left:535px;top:816px;letter-spacing:-0.3px">Close</div>

<div class="a" style="left:0;top:222px;width:7px;height:767px;background:linear-gradient(90deg,#c4daf2,#e2f0fc 55%,#c4dcf4)"></div>
<div class="a" style="left:7px;top:222px;width:1px;height:767px;background:#86a8d0"></div>
<div class="a" style="left:0;top:222px;width:1728px;height:3px;background:linear-gradient(#c6e0fa,#b2cff0)"></div>
<div class="a" style="left:1707px;top:225px;width:21px;height:699px;background:linear-gradient(90deg,#7e9ecb,#7898c6 50%,#86a6d0)"></div>
<div class="a" style="left:1707px;top:225px;width:1.5px;height:764px;background:#b3cfee"></div>
<svg class="a" style="left:1710px;top:230px" width="16" height="8"><path d="M1.5 6.5Q8 0 14.5 6.5z" fill="#2c4a78"/></svg>
<div class="a" style="left:1709px;top:395px;width:19px;height:68px;border:1.5px solid #5d6f88;border-radius:2px;background:linear-gradient(90deg,#dfe5ec,#f6f8fa 45%,#d4dce6)"></div>
<svg class="a" style="left:1712px;top:420px" width="12" height="10"><path d="M1 2h10M1 5h10M1 8h10" stroke="#6a7686" stroke-width="1.1"/></svg>
<svg class="a" style="left:1711px;top:907px" width="14" height="9"><path d="M1 1h12l-6 6z" fill="#5d6e9e"/></svg>
<div class="a" style="left:1707px;top:923px;width:21px;height:2px;background:#3c5478"></div>
<div class="a" style="left:1708px;top:925px;width:20px;height:64px;background:linear-gradient(90deg,#c4d8f0,#d8e8f8)"></div>
<svg class="a" style="left:1711px;top:929px" width="14" height="36"><path d="M2 6l5-5 5 5zM2 12l5-5 5 5zM2 24l5 5 5-5zM2 30l5 5 5-5z" fill="#111"/></svg>
<div class="a" style="left:0;top:988px;width:1728px;height:8px;background:linear-gradient(#cfe1f5,#b6d0ee)"></div>
<div class="a" style="left:0;top:996px;width:1728px;height:1.5px;background:#3e5878"></div>
<div id="status" class="a"></div>
<div id="taskbar" class="a"></div>
<div class="a" style="left:0;top:1026px;width:1728px;height:1.5px;background:#2f4560"></div>
<div class="t" style="left:11px;top:1004px;font-size:15px;color:#1e2c40">Slide 3 of 10</div>
<div class="a" style="left:107px;top:999px;width:1px;height:26px;background:#9fb6d2;box-shadow:1px 0 0 #f4f8fc"></div>
<div class="t" style="left:121px;top:1004px;font-size:15px;letter-spacing:0.3px;color:#1e2c40">"Office Theme"</div>
<div class="a" style="left:233px;top:999px;width:1px;height:26px;background:#9fb6d2;box-shadow:1px 0 0 #f4f8fc"></div>
<svg class="a" style="left:243px;top:1000px" width="26" height="22"><path d="M3 12l5 6 12-3-3-6" fill="#e8eef6" stroke="#3a4e70" stroke-width="1.5"/><path d="M7 10l4 5 9-13" fill="none" stroke="#2a3a58" stroke-width="2"/></svg>
<div class="t" style="left:290px;top:1004px;font-size:15px;letter-spacing:0.1px;color:#1e2c40">English (United States)</div>
<div class="a" style="left:456px;top:999px;width:1px;height:26px;background:#9fb6d2;box-shadow:1px 0 0 #f4f8fc"></div>
<div class="a" style="left:1370px;top:997px;width:358px;height:29px;background:linear-gradient(#c5d9f1 0%,#a9c3e6 50%,#9dbae0 55%,#b9d0ee 100%);border-left:1px solid #f0f5fb"></div>
<div class="a" style="left:1379px;top:999px;width:76px;height:25px;border:1px solid #8fa8c8;border-radius:2px;background:linear-gradient(#eef4fb,#d4e2f3)"></div>
<div class="a" style="left:1380px;top:1000px;width:25px;height:23px;background:linear-gradient(#fdf1bf,#f8d97a)"></div>
<svg class="a" style="left:1380px;top:1000px" width="75" height="23">
<rect x="5.5" y="4.5" width="14" height="13" fill="#fff" stroke="#3a3220" stroke-width="2"/><path d="M10 5v12M10 11h9" stroke="#3a3220" stroke-width="2"/>
<g fill="none" stroke="#2f3a48" stroke-width="1.7"><rect x="31" y="5" width="5" height="4" rx="1"/><rect x="39" y="5" width="5" height="4" rx="1"/><rect x="31" y="13" width="5" height="4" rx="1"/><rect x="39" y="13" width="5" height="4" rx="1"/></g>
<path d="M55 5h13v6H55zM61.5 11v5M57 17h9" fill="none" stroke="#2f3a48" stroke-width="1.8"/>
</svg>
<div class="t" style="left:1466px;top:1004px;font-size:15px;letter-spacing:0px;color:#1b3866;-webkit-text-stroke:0.3px #1b3866">74%</div>
<svg class="a" style="left:1500px;top:998px" width="228" height="28">
<path d="M29 14.5H168" stroke="#f4f8fc" stroke-width="1.2"/><path d="M29 13.5H168" stroke="#7f98b8" stroke-width="1"/>
<circle cx="17.6" cy="13.5" r="10" fill="#eef3fa" stroke="#586c88" stroke-width="1.4"/><path d="M12.5 13.5h10" stroke="#1f2a38" stroke-width="2.6"/>
<circle cx="177" cy="13.5" r="10" fill="#eef3fa" stroke="#586c88" stroke-width="1.4"/><path d="M172 13.5h10M177 8.5v10" stroke="#1f2a38" stroke-width="2.4"/>
<path d="M73 4.5h11v9l-5.5 5-5.5-5z" fill="#f6f9fc" stroke="#5a6e88" stroke-width="1.3"/><path d="M78.5 8v5" stroke="#5a6e88" stroke-width="1"/>
<path d="M100 11v4" stroke="#7f98b8" stroke-width="1"/>
<rect x="200.5" y="3.5" width="20" height="19" fill="#fff" stroke="#7890ac" stroke-width="1"/>
<g fill="#222"><rect x="204" y="7" width="3" height="3"/><rect x="214" y="7" width="3" height="3"/><rect x="204" y="16" width="3" height="3"/><rect x="214" y="16" width="3" height="3"/><rect x="209" y="11.5" width="3" height="3"/></g>
</svg>

<svg class="a" style="left:12px;top:1028px" width="52" height="52" viewBox="12 1028 52 52">
<defs><linearGradient id="orb" x1="0" y1="0" x2="0" y2="1"><stop offset="0" stop-color="#9ab8d4"/><stop offset="0.45" stop-color="#1c4a86"/><stop offset="0.75" stop-color="#1870b8"/><stop offset="1" stop-color="#48d0f4"/></linearGradient></defs>
<circle cx="37.3" cy="1052.7" r="23" fill="url(#orb)" stroke="#d2dde8" stroke-width="1.6"/>
<circle cx="37.3" cy="1052.7" r="21.6" fill="none" stroke="#1a3050" stroke-width="1"/>
<path d="M26 1043c3.5-2.5 7-2.5 11 0.5l-1.8 9c-3.5-2.5-7-2.5-11-0.5z" fill="#f06a28"/>
<path d="M38.5 1044c3.5 2.5 7 3 11 0.5l-2 9.5c-3.5 2.5-7.5 2.5-11-0.5z" fill="#88c040"/>
<path d="M24.5 1054c3.5-2.5 7.5-2.5 11 0.5l-2 9.5c-3.5-2.5-7-2.5-11 0z" fill="#48a8e8"/>
<path d="M36.5 1055.5c3.5 2.5 7 3 11 0.5l-2 9.5c-3.5 2.5-7.5 2.5-11-0.5z" fill="#f8c030"/>
</svg>
<div class="a" style="left:0;top:1028px;width:1728px;height:1px;background:rgba(230,240,250,.55)"></div>
<svg class="a" style="left:96px;top:1034px" width="50" height="44" viewBox="96 1034 50 44">
<path d="M100 1040h14l3 3h25v30h-42z" fill="#f0d88a" stroke="#c9a850" stroke-width="1"/>
<rect x="100" y="1048" width="42" height="26" fill="#f6e6a8"/>
<circle cx="104" cy="1039" r="2" fill="#2a9a3a"/><circle cx="117" cy="1041" r="2" fill="#d84030"/><circle cx="128" cy="1042" r="2" fill="#3a88c8"/>
<path d="M106 1076v-15h30v15h-6v-9h-18v9z" fill="#8ec8f0" stroke="#4a90c8" stroke-width="1.2"/>
</svg>
<div class="a" style="left:165px;top:1028px;width:79px;height:52px;border:1px solid #6a7e94;border-radius:3px;background:linear-gradient(#d2dfec,#b8cadc);box-shadow:inset 0 0 0 1px rgba(240,246,252,.6)"></div>
<svg class="a" style="left:180px;top:1030px" width="50" height="48" viewBox="180 1030 50 48">
<defs><linearGradient id="cb" x1="0" y1="0" x2="1" y2="1"><stop offset="0" stop-color="#4048c8"/><stop offset="1" stop-color="#1a1e90"/></linearGradient>
<linearGradient id="cs" x1="0" y1="0" x2="1" y2="0"><stop offset="0" stop-color="#f0f4fa"/><stop offset="0.5" stop-color="#8cb0e8"/><stop offset="1" stop-color="#d8e4f4"/></linearGradient>
<linearGradient id="cd" x1="0" y1="0" x2="1" y2="0"><stop offset="0" stop-color="#f4f6fa"/><stop offset="0.5" stop-color="#202230"/><stop offset="1" stop-color="#c8ccd8"/></linearGradient></defs>
<rect x="182.6" y="1032" width="43" height="42" fill="url(#cb)"/>
<path d="M182.6 1052.5C195 1042 210 1036 225.5 1033.5V1041C213 1042 203 1046 197.5 1053Z" fill="url(#cs)"/>
<path d="M225.5 1041C211 1045 205 1058 213 1068L225.5 1074V1069C215 1062 214 1049 225.5 1046Z" fill="#0a0e3a"/>
<path d="M225.5 1046C218 1050 217 1062 225.5 1069Z" fill="#5a64e0"/>
<path d="M182.6 1053.5L197.5 1053C204 1061 214 1069 225.5 1074H211C201 1066 191 1060 182.6 1057Z" fill="url(#cd)"/>
</svg>
<div class="a" style="left:248px;top:1028px;width:80px;height:52px;border:1px solid #6a7e94;border-radius:3px;background:linear-gradient(#d6e2ee,#bccee0);box-shadow:inset 0 0 0 1px rgba(240,246,252,.6)"></div>
<svg class="a" style="left:262px;top:1030px" width="52" height="48" viewBox="262 1030 52 48">
<path d="M272 1033h27c3 0 5 2 5 5v30l-1 3h-31c-4 0-6-2-6-6v-26c0-4 2-6 6-6z" fill="#fbeee6" stroke="#e0c0b0" stroke-width="1"/>
<path d="M272 1033c-4 1-6 4-6 8v24" fill="none" stroke="#f0a080" stroke-width="2"/>
<path d="M273.5 1044l33 -1.5 1.7 21-33 2z" fill="#d8401c" stroke="#b83010" stroke-width="0.8"/>
<path d="M278 1049h9M278 1054h9M278 1059h9" stroke="#fff2e8" stroke-width="2.6"/>
<circle cx="297" cy="1054" r="7" fill="#fff4ec"/><path d="M297 1054v-7a7 7 0 0 1 7 7z" fill="#d8401c"/>
</svg>
<div class="a" style="left:332px;top:1028px;width:80px;height:52px;border:1px solid #6a7e94;border-radius:3px;background:linear-gradient(#d2dfec,#b6c8da);box-shadow:inset 0 0 0 1px rgba(240,246,252,.6)"></div>
<svg class="a" style="left:353px;top:1031px" width="36" height="46" viewBox="353 1031 36 46">
<rect x="356" y="1034" width="30" height="40" rx="3" fill="#c8e2f2" stroke="#78a8c8" stroke-width="1.5"/>
<rect x="359.5" y="1037.5" width="23" height="11" fill="#f4f8fc" stroke="#90b0c8" stroke-width="0.8"/>
<rect x="360" y="1038" width="22" height="2.5" fill="#f0c050"/>
<text x="374" y="1047.5" font-family="Liberation Sans" font-size="8" font-weight="700" fill="#3a6a9a">8</text>
<g fill="#3a7898"><rect x="359.5" y="1051.5" width="3.5" height="3"/><rect x="364.5" y="1051.5" width="3.5" height="3"/><rect x="369.5" y="1051.5" width="3.5" height="3"/><rect x="374.5" y="1051.5" width="3.5" height="3"/><rect x="379.5" y="1051.5" width="3.5" height="3"/>
<rect x="359.5" y="1057" width="3.5" height="3"/><rect x="364.5" y="1057" width="3.5" height="3"/><rect x="369.5" y="1057" width="3.5" height="3"/><rect x="374.5" y="1057" width="3.5" height="3"/><rect x="379.5" y="1057" width="3.5" height="3"/>
<rect x="359.5" y="1062.5" width="3.5" height="3"/><rect x="364.5" y="1062.5" width="3.5" height="3"/><rect x="369.5" y="1062.5" width="3.5" height="3"/><rect x="374.5" y="1062.5" width="3.5" height="3"/>
<rect x="359.5" y="1068" width="3.5" height="3"/><rect x="364.5" y="1068" width="3.5" height="3"/><rect x="369.5" y="1068" width="3.5" height="3"/><rect x="374.5" y="1068" width="3.5" height="3"/></g>
<rect x="379.5" y="1062.5" width="3.5" height="8.5" fill="#e8b030"/>
</svg>
<svg class="a" style="left:1486px;top:1040px" width="120" height="30" viewBox="1486 1040 120 30">
<path d="M1489 1058l5.5-6 5.5 6z" fill="#f4f8fc" stroke="#6a7a8c" stroke-width="0.6"/>
<path d="M1517 1046v19" stroke="#eef2f6" stroke-width="3"/><path d="M1519 1046c4-1 8 1 13 0v9c-5 1-9-1-13 0z" fill="#f4f6f8" stroke="#8a96a2" stroke-width="0.8"/>
<circle cx="1532" cy="1059" r="6" fill="#d82a2a" stroke="#fff" stroke-width="1"/><path d="M1529.5 1056.5l5 5M1534.5 1056.5l-5 5" stroke="#fff" stroke-width="1.6"/>
<g fill="#f2f5f8" stroke="#5a6470" stroke-width="0.8"><rect x="1550" y="1058" width="3" height="4"/><rect x="1554" y="1055" width="3" height="7"/></g>
<path d="M1558 1062v-9l4-2v11zM1563 1062v-12l4-3v15z" fill="#f0c020" stroke="#8a7020" stroke-width="0.6"/>
<path d="M1584 1051h4l6-5v18l-6-5h-4z" fill="#f0f3f6" stroke="#5a6470" stroke-width="1"/><path d="M1597 1050c2 2.5 2 7.5 0 10" stroke="#f0f3f6" stroke-width="1.6" fill="none"/>
</svg>
<div class="t" style="left:1630px;top:1036px;font-size:16px;color:#fff">6:52 AM</div>
<div class="t" style="left:1629px;top:1057px;font-size:16px;color:#fff">1/4/2013</div>
<div class="a" style="left:1708px;top:1028px;width:20px;height:52px;border-left:1px solid #5a6a7a;background:linear-gradient(90deg,#8a98a6,#a8b4c0 50%,#7d8a98);box-shadow:inset 1px 0 0 #c8d2dc"></div>

</body></html>
